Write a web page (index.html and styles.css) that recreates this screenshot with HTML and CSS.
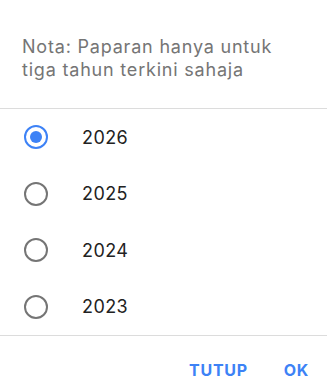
FILE: index.html
```html
<!DOCTYPE html>
<html>
<head>
<meta charset="utf-8">
<link rel="stylesheet" href="styles.css">
</head>
<body>
<div class="dialog">
  <div class="note">Nota: Paparan hanya untuk tiga tahun terkini sahaja</div>
  <div class="options">
    <label class="option"><span class="radio checked"></span><span class="year">2026</span></label>
    <label class="option"><span class="radio"></span><span class="year">2025</span></label>
    <label class="option"><span class="radio"></span><span class="year">2024</span></label>
    <label class="option"><span class="radio"></span><span class="year">2023</span></label>
  </div>
  <div class="actions">
    <span class="btn">TUTUP</span>
    <span class="btn">OK</span>
  </div>
</div>
</body>
</html>
```
FILE: styles.css
```css
html, body {
  margin: 0;
  padding: 0;
  background: #ffffff;
}
.dialog {
  width: 327px;
  height: 392px;
  font-family: Inter, "Noto Sans", sans-serif;
  display: flex;
  flex-direction: column;
}
.note {
  padding: 35px 40px 0 22px;
  height: 109px;
  box-sizing: border-box;
  font-size: 18px;
  line-height: 23px;
  letter-spacing: 0.8px;
  color: #757575;
  border-bottom: 1px solid #dcdcdc;
}
.options {
  display: flex;
  flex-direction: column;
  border-bottom: 1px solid #dcdcdc;
}
.option {
  height: 56.5px;
  display: flex;
  align-items: center;
  padding-left: 24px;
}
.radio {
  width: 24px;
  height: 24px;
  box-sizing: border-box;
  border: 2px solid #757575;
  border-radius: 50%;
  display: flex;
  align-items: center;
  justify-content: center;
  margin-right: 34px;
}
.radio.checked {
  border-color: #3d82f6;
}
.radio.checked::after {
  content: "";
  width: 12px;
  height: 12px;
  border-radius: 50%;
  background: #3d82f6;
}
.year {
  font-size: 18px;
  letter-spacing: 0.4px;
  color: #222222;
}
.actions {
  flex: 1;
  display: flex;
  justify-content: flex-end;
  align-items: center;
  gap: 36px;
  padding: 12px 18px 0 0;
}
.btn {
  font-size: 16px;
  font-weight: 700;
  color: #3d82f6;
  letter-spacing: 0.7px;
}
```
